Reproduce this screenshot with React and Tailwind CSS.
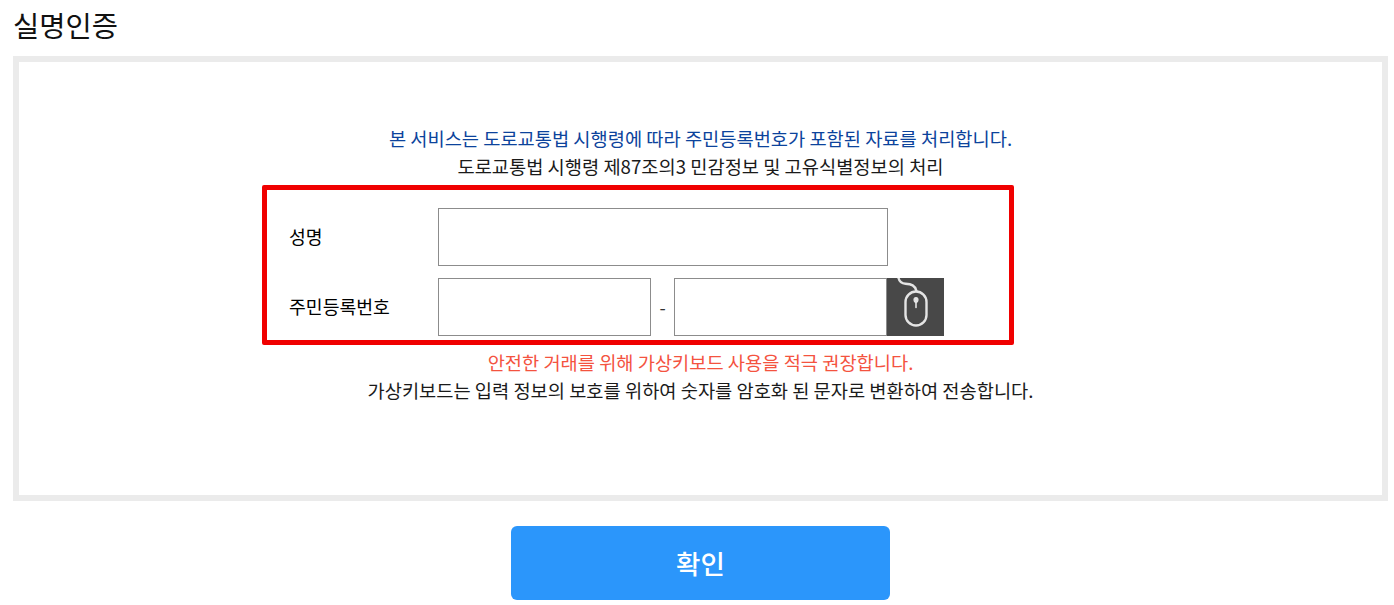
const FONT = "font-['Noto_Sans_CJK_KR','Noto_Sans',sans-serif]";

function MouseIcon() {
  return (
    <svg width="57" height="58" viewBox="0 0 57 58" fill="none" stroke="#e4e4e4" strokeWidth="2.400" strokeLinecap="round">
      <path d="M11.500 0c1 4 3 5.500 7 5.800c6 .4 9.500 1.500 11 7.200" />
      <rect x="18.500" y="13.500" width="21" height="34" rx="10.500" />
      <path d="M29 19.500c1.300 0 2 1.300 2 2.500s-.7 2.200-2 2.800c-1.300-.6-2-1.600-2-2.800s.7-2.500 2-2.500z" fill="#e4e4e4" strokeWidth="1.200" />
      <path d="M29 25v4.500" strokeWidth="1.600" />
    </svg>
  );
}

export default function App() {
  return (
    <div className={`${FONT} w-[1394px] h-[605px] bg-white px-[13px] overflow-hidden text-[#1a1a1a]`}>
      <h2 className="h-[56px] pt-[6px] text-[28.500px] leading-[38px] font-normal text-[#111]">실명인증</h2>

      <div className="h-[445px] w-[1375px] border-[6px] border-[#ebebeb] flex flex-col items-center pt-[62px]">
        <p className="text-[18.700px] leading-[28px] text-[#0c439c]">본 서비스는 도로교통법 시행령에 따라 주민등록번호가 포함된 자료를 처리합니다.</p>
        <p className="text-[18.700px] leading-[28px]">도로교통법 시행령 제87조의3 민감정보 및 고유식별정보의 처리</p>

        <div className="mt-[5px] self-start ml-[243px] w-[752px] h-[160px] border-[5px] border-[#f00000] rounded-[2px] pt-[18px] pl-[22px] flex flex-col gap-[12px]">
          <div className="flex items-center h-[58px]">
            <span className="w-[149px] text-[18.300px] text-black">성명</span>
            <div className="w-[450px] h-[58px] border border-[#8c8c8c]" />
          </div>
          <div className="flex items-center h-[58px]">
            <span className="w-[149px] text-[18.300px] text-black">주민등록번호</span>
            <div className="w-[213px] h-[58px] border border-[#8c8c8c]" />
            <span className="w-[23px] text-center text-[18px] text-[#333]">-</span>
            <div className="w-[213px] h-[58px] border border-[#8c8c8c]" />
            <div className="w-[57px] h-[58px] bg-[#484848]">
              <MouseIcon />
            </div>
          </div>
        </div>

        <p className="mt-[3px] text-[18.700px] leading-[28px] text-[#f4533f]">안전한 거래를 위해 가상키보드 사용을 적극 권장합니다.</p>
        <p className="text-[18.700px] leading-[28px]">가상키보드는 입력 정보의 보호를 위하여 숫자를 암호화 된 문자로 변환하여 전송합니다.</p>
      </div>

      <div className="flex justify-center w-[1375px] mt-[25px]">
        <button className="w-[379px] h-[74px] rounded-[6px] bg-[#2b96fb] text-white text-[26.500px] font-medium">확인</button>
      </div>
    </div>
  );
}
